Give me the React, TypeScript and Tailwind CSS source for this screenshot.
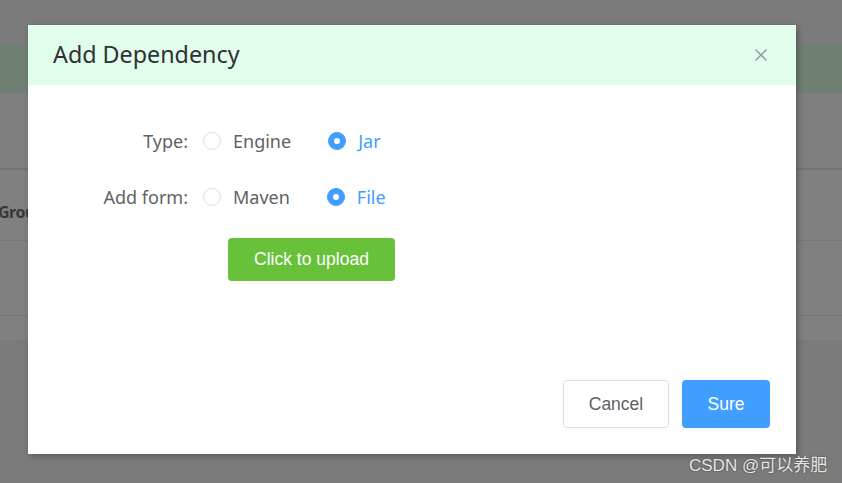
function Radio({ label, checked }: { label: string; checked?: boolean }) {
  return (
    <label className="flex items-center mr-[37px] cursor-pointer">
      <span
        className={`w-[18px] h-[18px] rounded-full flex items-center justify-center border ${
          checked ? 'bg-[#409eff] border-[#409eff]' : 'bg-white border-[#dcdfe6]'
        }`}
      >
        {checked && <span className="w-[6px] h-[6px] rounded-full bg-white" />}
      </span>
      <span className={`ml-[12px] text-[18px] ${checked ? 'text-[#409eff]' : 'text-[#606266]'}`}>{label}</span>
    </label>
  );
}

function FormRow({ label, children }: { label: string; children: React.ReactNode }) {
  return (
    <div className="flex items-center h-[40px]">
      <div className="w-[147px] pr-[12px] text-right text-[18px] text-[#606266]">{label}</div>
      <div className="flex items-center ml-[3px]">{children}</div>
    </div>
  );
}

export default function App() {
  return (
    <div className="relative w-[842px] h-[483px] overflow-hidden bg-[#7b7b7b] font-['Noto_Sans',sans-serif]">
      {/* page behind the mask */}
      <div className="h-[45px] bg-[#7b7b7b]" />
      <div className="h-[48px] bg-[#6f8072]" />
      <div className="h-[75px] bg-[#7f7f7f]" />
      <div className="h-[2px] bg-[#727278]" />
      <div className="bg-[#808080]">
        <div className="h-[71px] flex items-center border-b border-[#767676]">
          <span className="ml-[-2px] mt-[14px] text-[16px] tracking-[-0.5px] font-bold text-[#383838]">Group</span>
        </div>
        <div className="h-[75px] border-b border-[#767676]" />
        <div className="h-[24px]" />
      </div>

      {/* dialog */}
      <div className="absolute left-[28px] top-[25px] w-[768px] h-[429px] bg-white flex flex-col shadow-[2px_2px_6px_rgba(0,0,0,0.3)]">
        <div className="h-[60px] bg-[#e1fdec] flex items-center justify-between pl-[25px] pr-[29px]">
          <span className="text-[23.3px] text-[#303133] leading-none">Add Dependency</span>
          <svg width="12" height="12" viewBox="0 0 12 12" className="text-[#909399]">
            <path d="M0.5 0.5L11.5 11.5M11.5 0.5L0.5 11.5" stroke="currentColor" strokeWidth="1.3" />
          </svg>
        </div>

        <div className="pt-[36px] px-[25px]">
          <FormRow label="Type:">
            <Radio label="Engine" />
            <Radio label="Jar" checked />
          </FormRow>
          <div className="h-[16px]" />
          <FormRow label="Add form:">
            <Radio label="Maven" />
            <Radio label="File" checked />
          </FormRow>
          <div className="mt-[21px] ml-[175px]">
            <button className="w-[167px] h-[43px] rounded-[4px] bg-[#67c23a] text-white text-[17.5px] font-['Liberation_Sans',sans-serif]">
              Click to upload
            </button>
          </div>
        </div>

        <div className="mt-auto flex justify-end gap-[13px] pr-[26px] pb-[26px] font-['Liberation_Sans',sans-serif]">
          <button className="w-[106px] h-[48px] rounded-[4px] border border-[#dcdfe6] bg-white text-[#606266] text-[17.5px]">
            Cancel
          </button>
          <button className="w-[88px] h-[48px] rounded-[4px] bg-[#409eff] text-white text-[17.5px]">
            Sure
          </button>
        </div>
      </div>

      {/* watermark */}
      <div className="absolute left-[689px] top-[453px] text-[17px] text-[#e6e6e6] [text-shadow:0_0_2px_rgba(0,0,0,0.5)] font-['Liberation_Sans','Noto_Sans_CJK_SC',sans-serif]">
        CSDN @可以养肥
      </div>
    </div>
  );
}
